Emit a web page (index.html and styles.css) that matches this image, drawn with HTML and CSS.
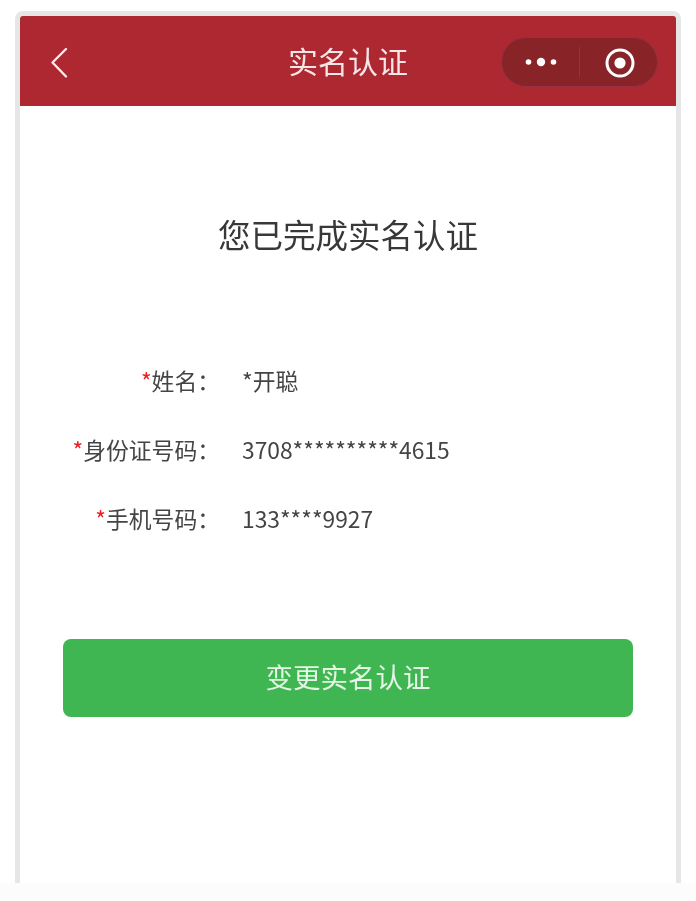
FILE: index.html
```html
<!DOCTYPE html>
<html lang="zh-CN">
<head>
    <meta charset="UTF-8">
    <meta name="viewport" content="width=device-width, initial-scale=1.0">
    <title>实名认证</title>
    <link rel="stylesheet" href="styles.css">
</head>
<body>
    <div class="phone">
        <div class="nav-bar">
            <svg class="back" width="18" height="32" viewBox="0 0 18 32">
                <path d="M16 2 L2.5 15.5 L16 29.5" fill="none" stroke="#f8ecec" stroke-width="2.4" stroke-linecap="round" stroke-linejoin="round"/>
            </svg>
            <div class="nav-title">实名认证</div>
            <div class="capsule">
                <div class="capsule-btn">
                    <svg width="32" height="12" viewBox="0 0 32 12">
                        <circle cx="3.5" cy="6" r="2.8" fill="#fff"/>
                        <circle cx="16" cy="6" r="4.2" fill="#fff"/>
                        <circle cx="28.5" cy="6" r="2.8" fill="#fff"/>
                    </svg>
                </div>
                <div class="capsule-line"></div>
                <div class="capsule-btn">
                    <svg class="record" width="30" height="30" viewBox="0 0 30 30">
                        <circle cx="15" cy="15" r="13" fill="none" stroke="#fff" stroke-width="3"/>
                        <circle cx="15" cy="15" r="5.6" fill="#fff"/>
                    </svg>
                </div>
            </div>
        </div>
        <div class="content">
            <h1 class="heading">您已完成实名认证</h1>
            <div class="info">
                <div class="row">
                    <div class="label"><span class="star">*</span>姓名：</div>
                    <div class="value">*开聪</div>
                </div>
                <div class="row">
                    <div class="label"><span class="star">*</span>身份证号码：</div>
                    <div class="value">3708**********4615</div>
                </div>
                <div class="row">
                    <div class="label"><span class="star">*</span>手机号码：</div>
                    <div class="value">133****9927</div>
                </div>
            </div>
            <div class="change-btn">变更实名认证</div>
        </div>
    </div>
</body>
</html>
```

FILE: styles.css
```css
body {
    margin: 0;
    height: 901px;
    padding-top: 11px;
    box-sizing: border-box;
    background: linear-gradient(to bottom, #fff 883px, #fcfcfc 883px);
    font-family: "Noto Sans CJK SC", "Noto Sans", sans-serif;
    overflow: hidden;
}

.phone {
    width: 666px;
    height: 872px;
    margin-left: 15px;
    box-sizing: border-box;
    border: 5px solid #e6e6e6;
    border-bottom: 0;
    border-radius: 8px 8px 0 0;
    background: #fff;
    filter: blur(0.5px);
}

.nav-bar {
    height: 90px;
    display: flex;
    align-items: center;
    background: #ad2830;
    border-radius: 3px 3px 0 0;
    position: relative;
}

.back {
    margin-left: 30px;
    margin-top: 3px;
}

.nav-title {
    position: absolute;
    left: 0;
    right: 0;
    top: 22px;
    text-align: center;
    color: #f6e6e7;
    font-size: 30px;
    line-height: 44px;
}

.capsule {
    margin-left: auto;
    margin-right: 18px;
    margin-top: 2px;
    width: 157px;
    height: 50px;
    box-sizing: border-box;
    display: flex;
    align-items: center;
    border: 1px solid #973046;
    border-radius: 25px;
    background: #882327;
}

.capsule-btn {
    flex: 1;
    display: flex;
    justify-content: center;
    align-items: center;
}

.record {
    margin-left: 3px;
    margin-top: 2px;
}

.capsule-line {
    width: 1px;
    height: 30px;
    background: #9c3040;
}

.content {
    padding: 0 43px;
}

.heading {
    margin: 0;
    padding-top: 103px;
    text-align: center;
    color: #383838;
    font-size: 32.5px;
    font-weight: 400;
    line-height: 50px;
}

.info {
    margin-top: 103px;
    display: flex;
    flex-direction: column;
    gap: 33px;
}

.row {
    display: flex;
    height: 36px;
    align-items: center;
    color: #444;
    font-size: 22.8px;
}

.label {
    width: 157px;
    text-align: right;
    white-space: nowrap;
}

.star {
    color: #f01c24;
}

.value {
    margin-left: 22px;
    white-space: nowrap;
}

.change-btn {
    margin-top: 103px;
    height: 78px;
    box-sizing: border-box;
    padding-bottom: 5px;
    display: flex;
    justify-content: center;
    align-items: center;
    border-radius: 8px;
    background: #3fb651;
    color: #e4f5e6;
    font-size: 27.5px;
}
```
